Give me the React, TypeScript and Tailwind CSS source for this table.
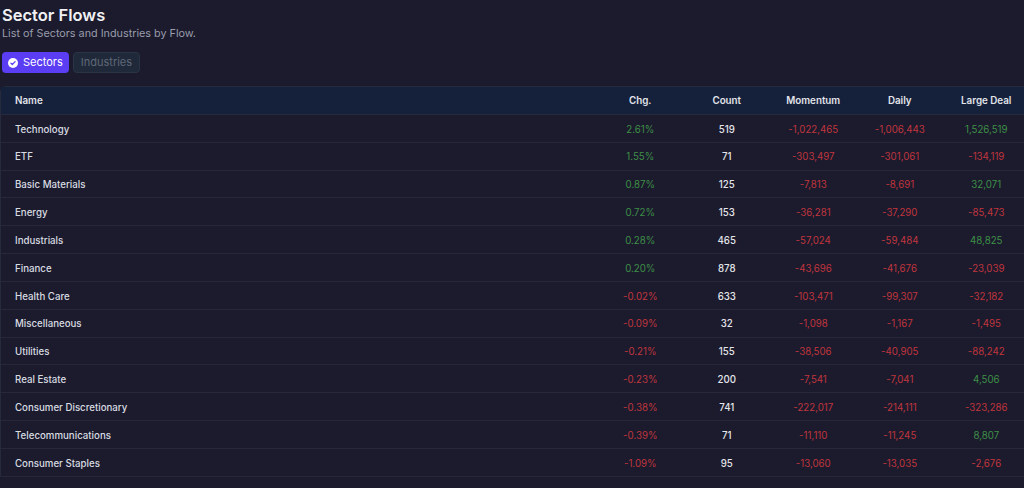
import React from "react";

type Row = { name: string; chg: string; count: string; mom: string; daily: string; large: string };

const rows: Row[] = [
  { name: "Technology", chg: "2.61%", count: "519", mom: "-1,022,465", daily: "-1,006,443", large: "1,526,519" },
  { name: "ETF", chg: "1.55%", count: "71", mom: "-303,497", daily: "-301,061", large: "-134,119" },
  { name: "Basic Materials", chg: "0.87%", count: "125", mom: "-7,813", daily: "-8,691", large: "32,071" },
  { name: "Energy", chg: "0.72%", count: "153", mom: "-36,281", daily: "-37,290", large: "-85,473" },
  { name: "Industrials", chg: "0.28%", count: "465", mom: "-57,024", daily: "-59,484", large: "48,825" },
  { name: "Finance", chg: "0.20%", count: "878", mom: "-43,696", daily: "-41,676", large: "-23,039" },
  { name: "Health Care", chg: "-0.02%", count: "633", mom: "-103,471", daily: "-99,307", large: "-32,182" },
  { name: "Miscellaneous", chg: "-0.09%", count: "32", mom: "-1,098", daily: "-1,167", large: "-1,495" },
  { name: "Utilities", chg: "-0.21%", count: "155", mom: "-38,506", daily: "-40,905", large: "-88,242" },
  { name: "Real Estate", chg: "-0.23%", count: "200", mom: "-7,541", daily: "-7,041", large: "4,506" },
  { name: "Consumer Discretionary", chg: "-0.38%", count: "741", mom: "-222,017", daily: "-214,111", large: "-323,286" },
  { name: "Telecommunications", chg: "-0.39%", count: "71", mom: "-11,110", daily: "-11,245", large: "8,807" },
  { name: "Consumer Staples", chg: "-1.09%", count: "95", mom: "-13,060", daily: "-13,035", large: "-2,676" },
];

const color = (v: string) => (v.startsWith("-") ? "text-[#c0353d]" : "text-[#3f8f47]");

export default function App() {
  return (
    <div
      className="w-[1024px] h-[488px] overflow-hidden bg-[#1b1b2d] text-[#e5e7eb]"
      style={{ fontFamily: "Inter, 'Noto Sans', sans-serif" }}
    >
      <div className="pl-[2px] pt-[5px]">
        <h1 className="text-[16.5px] leading-[20px] font-semibold text-[#f1f1f4]">Sector Flows</h1>
        <p className="text-[10.8px] leading-[14px] mt-[2px] text-[#9a9cab]">List of Sectors and Industries by Flow.</p>
        <div className="flex gap-[4px] mt-[11px]">
          <button className="flex items-center gap-[5px] h-[21px] px-[6px] rounded-[4px] bg-[#5b3df4] text-[11px] text-white">
            <svg width="10" height="10" viewBox="0 0 16 16">
              <circle cx="8" cy="8" r="8" fill="#fff" />
              <path d="M4.6 8.2l2.2 2.2 4.6-4.6" stroke="#5b3df4" strokeWidth="2" fill="none" strokeLinecap="round" strokeLinejoin="round" />
            </svg>
            Sectors
          </button>
          <button className="h-[21px] px-[7px] rounded-[4px] bg-[#20293a] border border-[#2b3445] text-[11px] text-[#5f6877]">
            Industries
          </button>
        </div>
      </div>
      <div className="mt-[13px] w-[1030px] rounded-t-[6px] border-t border-l border-[#252a3d]">
        <div className="flex h-[28px] pt-[2px] items-center bg-[#15203b] border-b border-[#262a3c] text-[9.8px] font-semibold text-[#e2e4ea]">
          <div className="w-[596px] pl-[14px]">Name</div>
          <div className="w-[86.5px] text-center">Chg.</div>
          <div className="w-[86.5px] text-center">Count</div>
          <div className="w-[86.5px] text-center">Momentum</div>
          <div className="w-[86.5px] text-center">Daily</div>
          <div className="w-[86.5px] text-center">Large Deal</div>
        </div>
        {rows.map((r) => (
          <div key={r.name} className="flex h-[27.84px] pt-[3px] items-center border-b border-[#262838] text-[9.7px]">
            <div className="w-[596px] pl-[14px] text-[#d9dbe2] font-medium">{r.name}</div>
            <div className={`w-[86.5px] text-center ${color(r.chg)}`}>{r.chg}</div>
            <div className="w-[86.5px] text-center text-[#e4e5ea] font-medium">{r.count}</div>
            <div className={`w-[86.5px] text-center ${color(r.mom)}`}>{r.mom}</div>
            <div className={`w-[86.5px] text-center ${color(r.daily)}`}>{r.daily}</div>
            <div className={`w-[86.5px] text-center ${color(r.large)}`}>{r.large}</div>
          </div>
        ))}
      </div>
    </div>
  );
}
